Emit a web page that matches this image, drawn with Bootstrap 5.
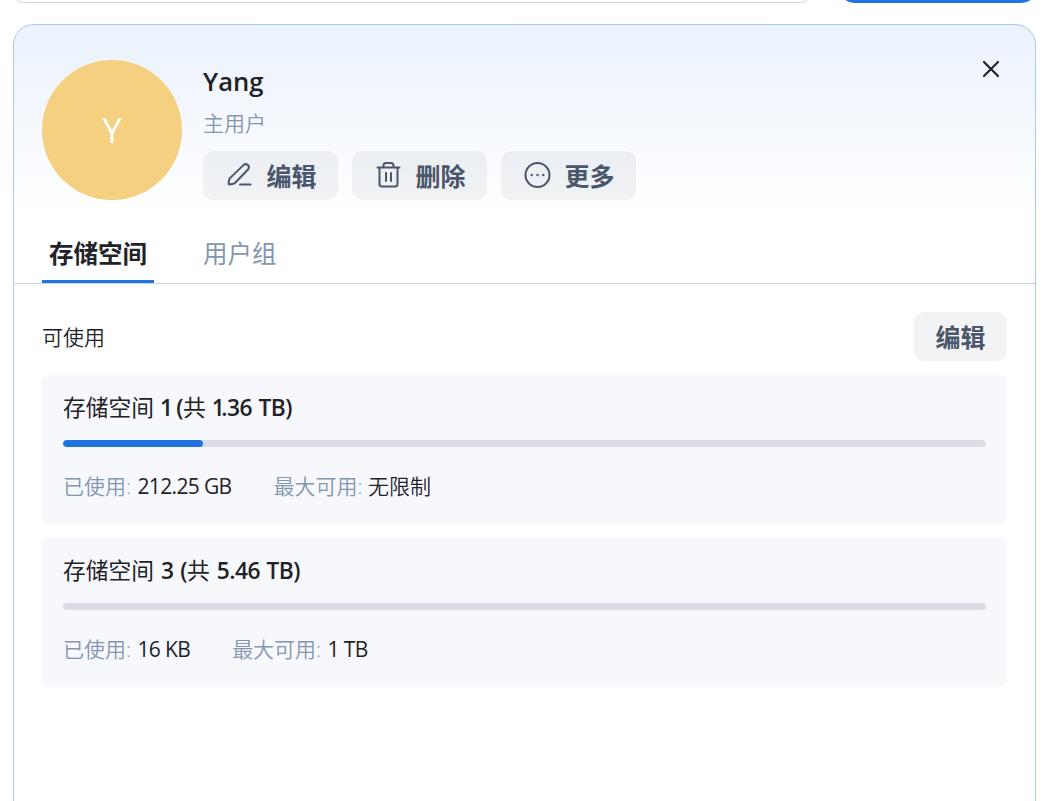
<!DOCTYPE html>
<html lang="zh-CN">
<head>
  <meta charset="UTF-8">
  <meta name="viewport" content="width=device-width, initial-scale=1">
  <title>用户管理</title>
  <link href="https://cdn.jsdelivr.net/npm/bootstrap@5.3.3/dist/css/bootstrap.min.css" rel="stylesheet">
  <style>
    body {
      height: 100vh;
      color: #1f2329;
      font-family: "Open Sans", "Noto Sans CJK SC", sans-serif;
      font-size: 21px;
      line-height: 28px;
    }
    .page {
      padding: 0 8px 0 13px;
    }
    .toolbar {
      height: 3px;
    }
    .search-box {
      width: 798px;
      height: 56px;
      border: 1px solid #c9d3e3;
      border-radius: 10.5px;
    }
    .add-btn {
      width: 196px;
      height: 56px;
      border-radius: 14px;
      background: #2173df;
    }
    .user-panel {
      margin-top: 21px;
      border: 1px solid #abc8f3;
      border-bottom: 0;
      border-radius: 21px 21px 0 0;
      background: linear-gradient(180deg, #ebf3fc 0, #f0f5fd 50px, #fff 190px);
    }
    .panel-head {
      padding: 35px 28px 0;
      gap: 21px;
    }
    .avatar {
      width: 140px;
      height: 140px;
      background: #f5d081;
      font-size: 35px;
    }
    .user-name {
      font-size: 25.6px;
      line-height: 44px;
      font-weight: 600;
    }
    .user-role {
      line-height: 38px;
      margin-bottom: 9px;
    }
    .subtle {
      color: #8496b0;
    }
    .thin {
      font-weight: 350;
    }
    .gray-btn {
      --bs-btn-color: #4a566b;
      --bs-btn-bg: rgba(31, 45, 65, .06);
      --bs-btn-border-width: 0;
      --bs-btn-border-radius: 10.5px;
      --bs-btn-padding-x: 21.5px;
      --bs-btn-padding-y: 0;
      --bs-btn-font-size: 25px;
      --bs-btn-font-weight: 700;
      --bs-btn-hover-color: #4a566b;
      --bs-btn-hover-bg: rgba(31, 45, 65, .1);
      display: flex;
      align-items: center;
      gap: 14px;
      height: 49px;
    }
    .gray-btn svg {
      margin-bottom: 1px;
    }
    .gray-btn span {
      padding-top: 2px;
    }
    .close-btn {
      line-height: 0;
    }
    .user-tabs {
      margin-top: 24px;
      padding: 0 28px;
      gap: 42px;
      border-bottom: 1px solid #c5d3e3;
    }
    .user-tabs .nav-link {
      height: 59px;
      padding: 0 7px;
      border-bottom: 3px solid transparent;
      color: #8496b0;
      font-size: 24.5px;
      line-height: 59px;
    }
    .user-tabs .nav-link.active {
      border-color: #2173df;
      color: #1f2329;
      font-weight: 700;
    }
    .panel-body {
      padding: 28px;
    }
    .storage-item {
      height: 149px;
      padding: 17px 21px 0;
      border-radius: 7px;
      background: #f7f8fc;
    }
    .storage-title {
      font-size: 22.75px;
      line-height: 32px;
      word-spacing: 1px;
    }
    .storage-title b {
      font-weight: 600;
      letter-spacing: -.5px;
    }
    /* pull in the wide side bearings of the digit 1 */
    .storage-title .one {
      letter-spacing: -3.5px;
      margin-left: -1px;
    }
    .storage-item .progress {
      --bs-progress-height: 7px;
      --bs-progress-bg: #dadde4;
      --bs-progress-bar-bg: #2173df;
      --bs-progress-border-radius: 4px;
      margin: 16px 0 25px;
    }
    .storage-item .progress-bar {
      border-radius: 4px;
    }
    .stats {
      gap: 42px;
    }
    .stats .stat-value {
      letter-spacing: -.65px;
      margin-left: 1px;
    }
  </style>
</head>
<body class="overflow-hidden">
  <div class="page">
    <div class="toolbar d-flex justify-content-between align-items-end overflow-hidden">
      <div class="search-box flex-shrink-0"></div>
      <div class="add-btn flex-shrink-0"></div>
    </div>

    <div class="user-panel vh-100">
      <div class="panel-head d-flex">
        <div class="avatar rounded-circle text-white d-flex align-items-center justify-content-center"><span>Y</span></div>
        <div class="flex-grow-1">
          <div class="user-name"><span>Yang</span></div>
          <div class="user-role subtle thin"><span>主用户</span></div>
          <div class="d-flex" style="gap: 14px">
            <button type="button" class="btn gray-btn">
              <svg width="28" height="28" viewBox="0 0 28 28" fill="none" stroke="currentColor" stroke-width="2" stroke-linecap="round" stroke-linejoin="round"><path d="M4.500 23.500Q3.400 23.500 3.600 22.300L4.200 18.800Q4.400 17.700 5.200 16.900L18.500 4.100Q20.500 2.300 22.700 3.800Q25 5.900 23.200 8.200L10.200 21.700Q9.400 22.500 8.300 22.700ZM15 23.500H25.500"/></svg>
              <span>编辑</span>
            </button>
            <button type="button" class="btn gray-btn">
              <svg width="28" height="28" viewBox="0 0 28 28" fill="none" stroke="currentColor" stroke-width="2" stroke-linecap="round" stroke-linejoin="round"><path d="M3.500 6.500H25.500M9.500 6.500V4.500Q9.500 2 12 2H17Q19.500 2 19.500 4.500V6.500M5.500 6.500V23Q5.500 25.500 8 25.500H21Q23.500 25.500 23.500 23V6.500M12 12V20M17 12V20"/></svg>
              <span>删除</span>
            </button>
            <button type="button" class="btn gray-btn">
              <svg width="28" height="28" viewBox="0 0 28 28"><circle cx="14.500" cy="14" r="12" fill="none" stroke="currentColor" stroke-width="2"/><g fill="currentColor"><circle cx="8.700" cy="14" r="1.200"/><circle cx="14.500" cy="14" r="1.200"/><circle cx="20.300" cy="14" r="1.200"/></g></svg>
              <span>更多</span>
            </button>
          </div>
        </div>
        <button type="button" class="btn close-btn border-0 p-0 align-self-start" aria-label="关闭">
          <svg width="34" height="18" viewBox="0 0 34 18" fill="none" stroke="#1f2329" stroke-width="2.200" stroke-linecap="round"><path d="M11 2L25 16M25 2L11 16"/></svg>
        </button>
      </div>

      <ul class="nav user-tabs">
        <li class="nav-item"><a class="nav-link active" href="#">存储空间</a></li>
        <li class="nav-item"><a class="nav-link" href="#">用户组</a></li>
      </ul>

      <div class="panel-body d-flex flex-column">
        <div class="d-flex justify-content-between align-items-center">
          <span class="thin">可使用</span>
          <button type="button" class="btn gray-btn"><span>编辑</span></button>
        </div>
        <div id="storageList" class="d-flex flex-column" style="gap: 14px; margin-top: 14px"></div>
      </div>
    </div>
  </div>

  <script>
    const storages = [
      { id: 1, total: "1.36 TB", used: "212.25 GB", max: "无限制", percent: 15.17 },
      { id: 3, total: "5.46 TB", used: "16 KB", max: "1 TB", percent: 0 }
    ];

    function tightenOnes(text) {
      return String(text).replace(/1/g, '<span class="one">1</span>');
    }

    function renderStorages() {
      document.getElementById("storageList").innerHTML = storages.map(s => `
        <div class="storage-item">
          <div class="storage-title">存储空间 <b>${tightenOnes(s.id)}</b> <b>(</b>共 <b>${tightenOnes(s.total)})</b></div>
          <div class="progress" role="progressbar">
            <div class="progress-bar" style="width: ${s.percent}%"></div>
          </div>
          <div class="stats d-flex">
            <div><span class="subtle thin">已使用: </span><span class="stat-value">${s.used}</span></div>
            <div><span class="subtle thin">最大可用: </span><span class="${/\d/.test(s.max) ? "stat-value" : "thin"}">${s.max}</span></div>
          </div>
        </div>`).join("");
    }

    renderStorages();
  </script>
  <script src="https://cdn.jsdelivr.net/npm/bootstrap@5.3.3/dist/js/bootstrap.bundle.min.js"></script>
</body>
</html>
